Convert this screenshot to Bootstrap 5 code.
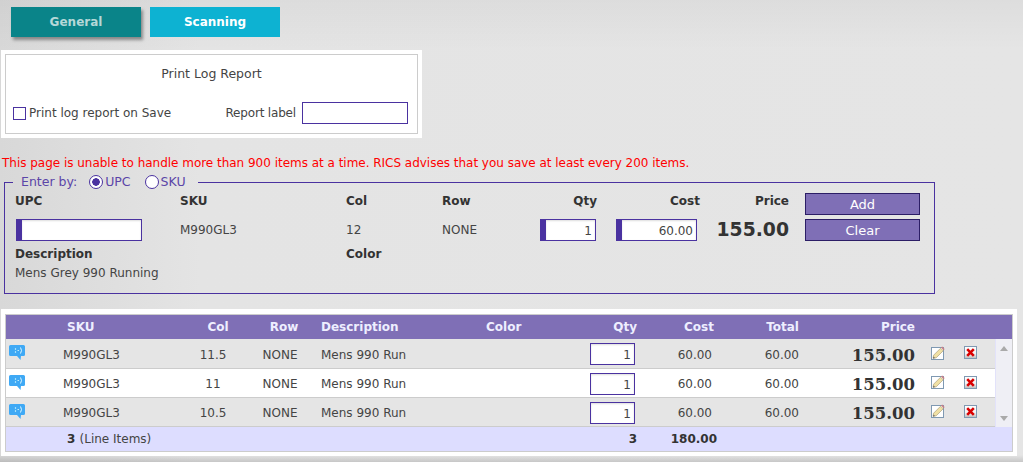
<!DOCTYPE html>
<html lang="en">
<head>
<meta charset="utf-8">
<title>Scanning</title>
<link href="https://cdn.jsdelivr.net/npm/bootstrap@5.3.0/dist/css/bootstrap.min.css" rel="stylesheet">
<style>
html,body{height:462px;overflow:hidden}
body{font-family:"DejaVu Sans",Verdana,sans-serif;font-size:12px;line-height:15px;color:#444;
 background:linear-gradient(180deg,rgba(0,0,0,.035),rgba(0,0,0,0) 50px),linear-gradient(0deg,rgba(0,0,0,.13),rgba(0,0,0,0) 7px),linear-gradient(90deg,#d8d8d8 0,#e4e4e4 200px,#e5e5e5 100%);}
.pagewrap{padding:7px 0 0 1px}
.tabbar{padding-left:10px;gap:9px;margin-bottom:13px}
.tabbtn{width:130px;height:30px;border:0;border-radius:0;font-weight:700;font-size:12px;padding:0;line-height:30px}
.tabbtn.on-tab{background:#0a8489;color:#b5d8d8;box-shadow:2px 3px 3px #888}
.tabbtn.off-tab{background:#0db2d2;color:#fff}
.printbox{width:421px;height:88px;background:#fff;padding:4px}
.printinner{height:80px;border:1px solid #ccc;padding:11px 9px 0 7px}
.printtitle{text-align:center;font-size:12.5px;line-height:16px;margin-bottom:19px;padding-left:2px}
.printrow{height:24px}
.replabel{letter-spacing:-.17px}
.form-check-input.pcheck{width:13px;height:13px;margin:1px 3px 0 0;border:1px solid #4a32a0;border-radius:0;background:#fff;flex:none}
.form-check-input.pradio{width:14px;height:14px;margin:0 2px 0 0;border:1px solid #4a32a0;background:#fff;flex:none}
.form-check-input.pradio:checked{background:radial-gradient(circle,#4a32a0 0,#4a32a0 3.5px,#fff 4px);border-color:#4a32a0}
.form-control.rinput{width:106px;height:22px;border:1.5px solid #4a32a0;border-radius:0;padding:0 3px;font-size:12px;margin-left:6px;background:#fff}
.warntext{color:#f00;margin:17px 0 2px 1px;line-height:16px;letter-spacing:-.02px}
.entryset{width:931px;height:121px;margin-left:3px;border:1px solid #4a32a0;padding:0 14px 0 10px;margin-bottom:15px}
.entryset legend{float:none;width:auto;margin:0 0 0 -2px;padding:0 8px;font-size:12.5px;line-height:18px;height:18px;color:#5b45a8;display:flex;align-items:center}
.entryset legend .lgtext{margin-right:12px}
.entryset legend label{margin-right:14px;display:flex;align-items:center;color:#5b45a8;font-size:12.5px}
.entryset legend label:last-child{margin-right:4px}
.entrygrid{display:grid;grid-template-columns:165px 166px 96px 88px 67px 103px 89px 131px;grid-template-rows:22px 22px 16px 14px;row-gap:4px;padding-top:2px}
.fhead{font-weight:700;color:#333;align-self:start;line-height:15px;padding-top:1px}
.fhead.lowhead{padding-top:2px}
.fval{align-self:center}
.descvalue{padding-top:1px}
.barinput{height:22px;border:1px solid #4a32a0;border-left-width:6px;border-radius:0;padding:1px 3px 0;font-size:12px;text-align:right;background:#fff;color:#444;box-shadow:inset 0 1px 2px #ddd}
.barinput.upc-in{width:126px;margin-left:1px}
.barinput.qty-in{width:56px;margin-left:auto;margin-right:1px}
.barinput.cost-in{width:81px;margin-left:auto;margin-right:3px}
.bigprice{font-size:18.8px;font-weight:700;color:#333;text-align:right;line-height:22px}
.actbtn{width:115px;height:22px;margin-left:16px;background:#7f6fb6;color:#fff;border:1px solid #2c1e66;border-radius:0;padding:1px 0 0;font-size:13px;line-height:19px}
.descline{grid-column:1/3}
.gridbox{width:1016px;height:147px;background:#fff;padding:5px 4px 4px 4px;margin-bottom:0}
.gridtable{table-layout:fixed;width:1008px;margin:0;border:1px solid #ccc;border-collapse:separate;border-spacing:0;font-size:12px;color:#444;height:138px}
.gridtable th,.gridtable td{padding:0;border:0;vertical-align:middle;box-shadow:none;background:transparent;white-space:nowrap}
.gridtable thead th{background:#7f6fb6;color:#eef;height:24px;font-weight:700}
.gridtable tbody tr.dimrow td{background:#e5e5e5}
.gridtable tbody tr td{height:29px;border-bottom:1px solid #ccc;padding-top:3px}
.gridtable tbody tr:first-child td{height:30px}
.gridtable tbody tr td.c-qty{padding-top:1px}
.gridtable tbody tr td.scrolltrack{background:#efeff5;border-bottom:0;border-left:1px solid #e2e2fa;vertical-align:top;padding:0;height:88px}
.gridtable tfoot td{background:#ddf;height:24px;font-weight:700;color:#333}
.gridtable tfoot .thin-note{font-weight:400;color:#444}
.c-sku{padding-left:19px!important}.h-sku{padding-left:23px!important}
.c-mid{text-align:center}.h-mid{text-align:center;padding-left:8px!important}
.h-col{padding-left:10px!important}
.c-desc{padding-left:11px!important}.c-color{padding-left:6px!important}
.c-qty{text-align:right;padding-right:5px!important}.h-qty{text-align:right;padding-right:3px!important}
.c-cost{text-align:right;padding-right:8px!important}.h-cost{text-align:right;padding-right:6px!important}.f-cost{text-align:right;padding-right:3px!important}
.c-total{text-align:right;padding-right:6px!important}
.c-price{text-align:right;padding-right:5px!important;font-family:"DejaVu Serif",Georgia,serif;font-size:16.5px;font-weight:700;color:#333}
.h-price{text-align:right;padding-right:5px!important}
.cellinput{display:inline-block;width:45px;height:22px;border:1px solid #4a32a0;border-radius:0;padding:2px 3px 0;font-size:12px;text-align:right;background:#fff;color:#444;box-shadow:inset 0 1px 2px #ddd;vertical-align:middle}
.ic-bubble{display:block;margin:0 0 5px 3px}
.ic-edit{display:block;margin:0 0 5px 11px}
.ic-del{display:block;margin:0 0 5px 9px}
.scrollinner{height:87px;padding:7px 0 5px;display:flex;flex-direction:column;justify-content:space-between;align-items:center}
</style>
</head>
<body>
<svg width="0" height="0" class="position-absolute">
 <defs>
  <linearGradient id="delfill" x1="0" y1="0" x2="0" y2="1"><stop offset="0" stop-color="#fff"/><stop offset=".6" stop-color="#f2f2f2"/><stop offset="1" stop-color="#bbb"/></linearGradient>
 </defs>
 <symbol id="bubble" viewBox="0 0 16 15">
  <path d="M1.5 0H14.5Q16 0 16 1.5V9.5Q16 11 14.5 11H12L11.5 15L8 11H1.5Q0 11 0 9.5V1.5Q0 0 1.5 0Z" fill="#3fa9f5"/>
  <circle cx="6.5" cy="4" r=".7" fill="#dff"/><circle cx="6.5" cy="7" r=".7" fill="#dff"/>
  <path d="M8.5 5.5H10" stroke="#dff" stroke-width=".8"/>
  <path d="M11.5 2.5Q13.5 5.5 11.5 8.5" fill="none" stroke="#eff" stroke-width=".9"/>
 </symbol>
 <symbol id="pencil" viewBox="0 0 14 14">
  <rect x=".5" y="1.5" width="12" height="12" fill="#fff" stroke="#7f99b2"/>
  <path d="M2.6 9.2L9.6 2.2L12.2 4.8L5.2 11.8L2 12.4Z" fill="#f0e0a4" stroke="#ab9f7a" stroke-width=".7"/>
  <path d="M10 1.6L11.2 .5L13.6 2.9L12.6 4.2Z" fill="#c97f86"/>
  <path d="M2.5 10.4L2 12.4L4 11.9Z" fill="#666"/>
 </symbol>
 <symbol id="delx" viewBox="0 0 13 13">
  <rect x=".5" y=".5" width="12" height="12" fill="url(#delfill)" stroke="#7f99b2"/>
  <path d="M3.2 3.2L9.8 9.8M9.8 3.2L3.2 9.8" stroke="#d90000" stroke-width="2.6"/>
 </symbol>
</svg>
<div class="pagewrap">
 <div class="d-flex tabbar">
  <button type="button" class="btn tabbtn on-tab">General</button>
  <button type="button" class="btn tabbtn off-tab">Scanning</button>
 </div>

 <div class="printbox">
  <div class="printinner">
   <div class="printtitle">Print Log Report</div>
   <div class="d-flex align-items-center justify-content-between printrow">
    <label class="d-flex align-items-center"><input type="checkbox" class="form-check-input pcheck">Print log report on Save</label>
    <div class="d-flex align-items-center"><span class="replabel">Report label</span><input type="text" class="form-control rinput"></div>
   </div>
  </div>
 </div>

 <div class="warntext">This page is unable to handle more than 900 items at a time. RICS advises that you save at least every 200 items.</div>

 <fieldset class="entryset">
  <legend><span class="lgtext">Enter by:</span>
   <label><input type="radio" name="enterby" class="form-check-input pradio" checked>UPC</label>
   <label><input type="radio" name="enterby" class="form-check-input pradio">SKU</label>
  </legend>
  <div class="entrygrid">
   <div class="fhead">UPC</div><div class="fhead">SKU</div><div class="fhead">Col</div><div class="fhead">Row</div>
   <div class="fhead text-end">Qty</div><div class="fhead text-end">Cost</div><div class="fhead text-end">Price</div>
   <div><button type="button" class="btn actbtn">Add</button></div>
   <div><input type="text" class="form-control barinput upc-in"></div>
   <div class="fval">M990GL3</div><div class="fval">12</div><div class="fval">NONE</div>
   <div class="d-flex"><input type="text" class="form-control barinput qty-in" value="1"></div>
   <div class="d-flex"><input type="text" class="form-control barinput cost-in" value="60.00"></div>
   <div class="bigprice">155.00</div>
   <div><button type="button" class="btn actbtn">Clear</button></div>
   <div class="fhead lowhead descline">Description</div><div class="fhead lowhead">Color</div>
   <div class="descline descvalue">Mens Grey 990 Running</div>
  </div>
 </fieldset>

 <div class="gridbox">
  <table class="table gridtable">
   <colgroup>
    <col style="width:38px"><col style="width:132px"><col style="width:74px"><col style="width:60px"><col style="width:170px"><col style="width:90px"><col style="width:70px"><col style="width:80px"><col style="width:85px"><col style="width:115px"><col style="width:35px"><col style="width:40px"><col style="width:17px">
   </colgroup>
   <thead>
    <tr><th></th><th class="h-sku">SKU</th><th class="h-mid h-col">Col</th><th class="h-mid">Row</th><th class="c-desc">Description</th><th class="c-color">Color</th><th class="h-qty">Qty</th><th class="h-cost">Cost</th><th class="h-cost">Total</th><th class="h-price">Price</th><th></th><th></th><th></th></tr>
   </thead>
   <tbody>
    <tr class="dimrow">
     <td><svg class="ic-bubble" width="16" height="15"><use href="#bubble"/></svg></td><td class="c-sku">M990GL3</td><td class="c-mid">11.5</td><td class="c-mid">NONE</td><td class="c-desc">Mens 990 Run</td><td></td>
     <td class="c-qty"><input type="text" class="form-control cellinput" value="1"></td><td class="c-cost">60.00</td><td class="c-total">60.00</td><td class="c-price">155.00</td>
     <td><svg class="ic-edit" width="14" height="14"><use href="#pencil"/></svg></td><td><svg class="ic-del" width="13" height="13"><use href="#delx"/></svg></td>
     <td rowspan="3" class="scrolltrack"><div class="scrollinner">
      <svg width="8" height="5"><path d="M4 0L8 5H0Z" fill="#aaa"/></svg>
      <svg width="8" height="5"><path d="M4 5L8 0H0Z" fill="#aaa"/></svg>
     </div></td>
    </tr>
    <tr>
     <td><svg class="ic-bubble" width="16" height="15"><use href="#bubble"/></svg></td><td class="c-sku">M990GL3</td><td class="c-mid">11</td><td class="c-mid">NONE</td><td class="c-desc">Mens 990 Run</td><td></td>
     <td class="c-qty"><input type="text" class="form-control cellinput" value="1"></td><td class="c-cost">60.00</td><td class="c-total">60.00</td><td class="c-price">155.00</td>
     <td><svg class="ic-edit" width="14" height="14"><use href="#pencil"/></svg></td><td><svg class="ic-del" width="13" height="13"><use href="#delx"/></svg></td>
    </tr>
    <tr class="dimrow">
     <td><svg class="ic-bubble" width="16" height="15"><use href="#bubble"/></svg></td><td class="c-sku">M990GL3</td><td class="c-mid">10.5</td><td class="c-mid">NONE</td><td class="c-desc">Mens 990 Run</td><td></td>
     <td class="c-qty"><input type="text" class="form-control cellinput" value="1"></td><td class="c-cost">60.00</td><td class="c-total">60.00</td><td class="c-price">155.00</td>
     <td><svg class="ic-edit" width="14" height="14"><use href="#pencil"/></svg></td><td><svg class="ic-del" width="13" height="13"><use href="#delx"/></svg></td>
    </tr>
   </tbody>
   <tfoot>
    <tr><td></td><td class="h-sku">3 <span class="thin-note">(Line Items)</span></td><td colspan="4"></td><td class="h-qty">3</td><td class="f-cost">180.00</td><td colspan="5"></td></tr>
   </tfoot>
  </table>
 </div>
</div>
<script src="https://cdn.jsdelivr.net/npm/bootstrap@5.3.0/dist/js/bootstrap.bundle.min.js"></script>
</body>
</html>
